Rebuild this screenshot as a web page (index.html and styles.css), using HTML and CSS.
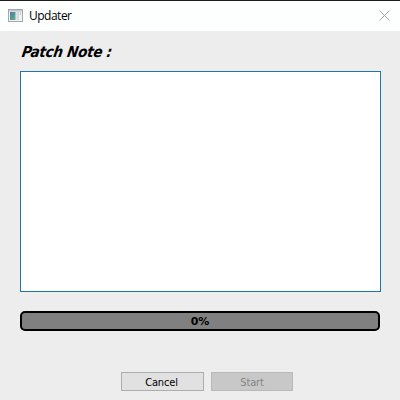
FILE: index.html
```html
<!DOCTYPE html>
<html lang="en">
<head>
<meta charset="utf-8">
<title>Updater</title>
<link rel="stylesheet" href="styles.css">
</head>
<body>
<div class="window">
  <header class="titlebar">
    <svg class="app-icon" width="15" height="13" viewBox="0 0 15 13">
      <defs><linearGradient id="pane" x1="0" y1="0" x2="1" y2="1"><stop offset="0" stop-color="#477fa0"/><stop offset="1" stop-color="#65ad92"/></linearGradient></defs>
      <rect x=".5" y=".5" width="14" height="12" fill="#f1f1f2" stroke="#a6a8ad"/>
      <rect x="1" y="1" width="13" height="1.5" fill="#c3c5ca"/>
      <rect x="2" y="3" width="5.5" height="8" fill="url(#pane)"/>
      <rect x="8.5" y="3" width="2.5" height="8" fill="#d7d8db"/>
      <rect x="12" y="3" width="1" height="3" fill="#c9c9cc"/>
    </svg>
    <span class="title">Updater</span>
    <svg class="close" width="11" height="11" viewBox="0 0 11 11"><path d="M.5.5l10 10M10.5.5l-10 10" stroke="#a5a5a5" stroke-width="1"/></svg>
  </header>
  <main class="content">
    <h1 class="heading">Patch Note :</h1>
    <div class="notes"></div>
    <div class="progress"><span class="value">0%</span></div>
    <div class="actions">
      <button class="btn cancel">Cancel</button>
      <button class="btn start" disabled>Start</button>
    </div>
  </main>
</div>
</body>
</html>
```
FILE: styles.css
```css
* { box-sizing: border-box; }
body { margin: 0; }
.window {
  width: 400px;
  height: 400px;
  overflow: hidden;
  background: #eeedee;
  color: #000;
}
.titlebar {
  display: flex;
  align-items: center;
  height: 31px;
  padding: 0 10px 0 8px;
  border-top: 1px solid #201c20;
  background: #fdfffe;
}
.app-icon { margin-top: -2px; }
.title {
  margin-left: 6px;
  font: 12px/16px "Open Sans", sans-serif;
  letter-spacing: -0.5px;
}
.close { margin-left: auto; margin-top: -2px; }
.content { padding: 11px 19px 0 20px; }
.heading {
  margin: 0 0 9px 2px;
  height: 20px;
  font: italic bold 15px/20px "DejaVu Sans Condensed", "DejaVu Sans", sans-serif;
  letter-spacing: -0.25px;
  white-space: nowrap;
  transform: skewX(-9deg);
}
.notes {
  height: 221px;
  border: 1px solid #1d76a3;
  background: #fff;
}
.progress {
  display: flex;
  align-items: center;
  justify-content: center;
  width: 360px;
  height: 20px;
  margin-top: 19px;
  border: 2px solid #000;
  border-radius: 5px;
  background: #808080;
}
.value {
  font: bold 11px/16px "DejaVu Sans", sans-serif;
  padding-top: 2px;
}
.actions {
  display: flex;
  gap: 7px;
  margin: 41px 0 0 101px;
}
.btn {
  height: 19px;
  padding: 2px 0 0;
  border: 1px solid #adadad;
  font: 11px/15px "DejaVu Sans Condensed", "DejaVu Sans", sans-serif;
  letter-spacing: -0.15px;
}
.cancel { width: 83px; padding-right: 2px; background: #e1e1e1; color: #000; }
.start { width: 82px; background: #c8c8c8; border-color: #b9b9b9; color: #858585; }
```
